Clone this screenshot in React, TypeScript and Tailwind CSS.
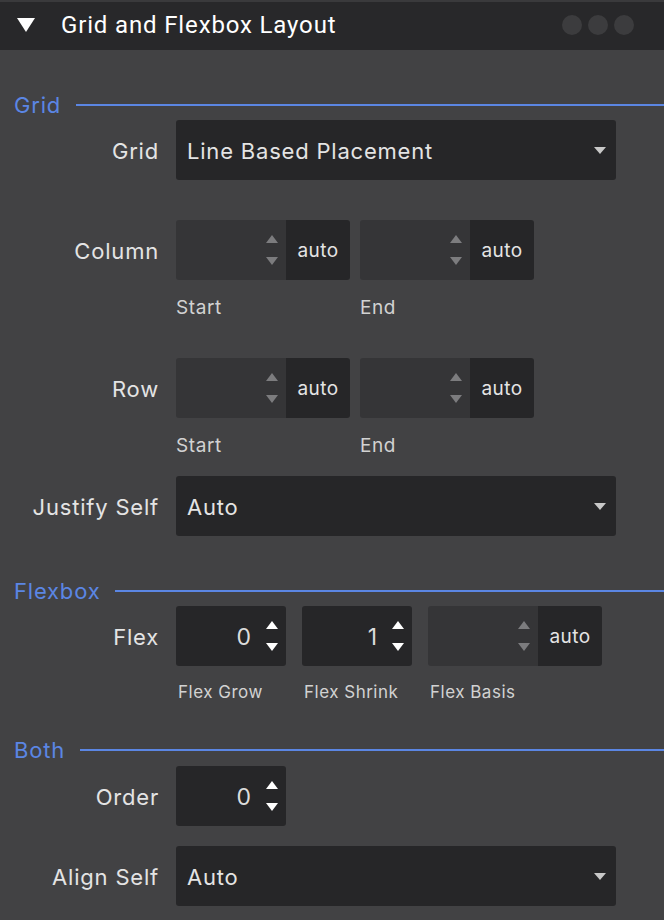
import React from "react";

const BLUE = "text-[#5b86e4]";

function SectionHeader({ title }: { title: string }) {
  return (
    <div className="flex items-center h-6 pl-[14px]">
      <span className={`text-[22px] leading-6 tracking-[0.8px] ${BLUE}`}>{title}</span>
      <div className="flex-1 h-[1.5px] bg-[#5b86e4] ml-[15px]" />
    </div>
  );
}

function Label({ children }: { children: React.ReactNode }) {
  return (
    <div className="w-[160px] shrink-0 text-right text-[22px] tracking-[0.8px] text-[#e4e4e4] pr-[1px] pt-[2px]">{children}</div>
  );
}

function Arrows({ dim }: { dim?: boolean }) {
  const c = dim ? "#7c7c7e" : "#ffffff";
  return (
    <svg width="14" height="32" viewBox="0 0 14 32" className="shrink-0">
      <polygon points="7,1 13,9 1,9" fill={c} />
      <polygon points="1,23 13,23 7,31" fill={c} />
    </svg>
  );
}

function AutoInput() {
  return (
    <div className="flex w-[174px] h-[60px] rounded-[3px] overflow-hidden">
      <div className="w-[110px] bg-[#353537] flex items-center justify-end pr-[7px]">
        <Arrows dim />
      </div>
      <div className="flex-1 bg-[#262628] flex items-center justify-center text-[19px] tracking-[0.4px] text-[#e4e4e4] pt-[3px]">auto</div>
    </div>
  );
}

function NumInput({ value }: { value: string }) {
  return (
    <div className="flex w-[110px] h-[60px] rounded-[3px] bg-[#262628] items-center justify-end pr-[7px]">
      <span className="text-[23px] text-[#dcdcdc] mr-[14px] pt-[2px]">{value}</span>
      <Arrows />
    </div>
  );
}

function Select({ value }: { value: string }) {
  return (
    <div className="flex w-[440px] h-[60px] rounded-[3px] bg-[#262628] items-center pl-[11px] pr-[10px]">
      <span className="flex-1 text-[22px] tracking-[0.8px] text-[#e4e4e4] pt-[2px]">{value}</span>
      <svg width="12" height="7" viewBox="0 0 12 7">
        <polygon points="0,0 12,0 6,7" fill="#c8c8c8" />
      </svg>
    </div>
  );
}

function SubLabel({ children }: { children: React.ReactNode }) {
  return <div className="w-[174px] text-[19px] tracking-[0.6px] text-[#d2d2d2] pt-[2px]">{children}</div>;
}

function FlexLabel({ children }: { children: React.ReactNode }) {
  return <div className="w-[110px] text-[17px] tracking-[0.5px] text-[#d2d2d2] whitespace-nowrap pt-[2px]">{children}</div>;
}

export default function App() {
  return (
    <div
      className="w-[664px] h-[920px] bg-[#424244] overflow-hidden"
      style={{ fontFamily: "Inter, 'Noto Sans', sans-serif" }}
    >
      <div className="h-[2px] bg-[#3a3a3c]" />
      <div className="h-[48px] bg-[#28282a] flex items-center pb-[2px]">
        <svg width="18" height="14" viewBox="0 0 18 14" className="ml-[17px]">
          <polygon points="0,0 18,0 9,14" fill="#ffffff" />
        </svg>
        <span
          className="ml-[26px] text-[24px] tracking-[0.85px] text-white flex-1"
          style={{ fontFamily: "Roboto, 'Liberation Sans', sans-serif" }}
        >
          Grid and Flexbox Layout
        </span>
        <div className="flex gap-[6px] mr-[30px]">
          <div className="w-5 h-5 rounded-full bg-[#3c3c3e]" />
          <div className="w-5 h-5 rounded-full bg-[#3c3c3e]" />
          <div className="w-5 h-5 rounded-full bg-[#3c3c3e]" />
        </div>
      </div>

      <div className="pt-[43px]">
        <SectionHeader title="Grid" />
        <div className="flex items-center gap-4 mt-[3px]">
          <Label>Grid</Label>
          <Select value="Line Based Placement" />
        </div>

        <div className="flex items-center gap-4 mt-[40px]">
          <Label>Column</Label>
          <div className="flex gap-[10px]">
            <AutoInput />
            <AutoInput />
          </div>
        </div>
        <div className="flex ml-[176px] mt-[15px] gap-[10px] h-[24px] items-center">
          <SubLabel>Start</SubLabel>
          <SubLabel>End</SubLabel>
        </div>

        <div className="flex items-center gap-4 mt-[39px]">
          <Label>Row</Label>
          <div className="flex gap-[10px]">
            <AutoInput />
            <AutoInput />
          </div>
        </div>
        <div className="flex ml-[176px] mt-[15px] gap-[10px] h-[24px] items-center">
          <SubLabel>Start</SubLabel>
          <SubLabel>End</SubLabel>
        </div>

        <div className="flex items-center gap-4 mt-[19px]">
          <Label>Justify Self</Label>
          <Select value="Auto" />
        </div>

        <div className="mt-[43px]">
          <SectionHeader title="Flexbox" />
        </div>
        <div className="flex items-center gap-4 mt-[3px]">
          <Label>Flex</Label>
          <div className="flex gap-4">
            <NumInput value="0" />
            <NumInput value="1" />
            <AutoInput />
          </div>
        </div>
        <div className="flex ml-[178px] mt-[14px] gap-4 h-[24px] items-center">
          <FlexLabel>Flex Grow</FlexLabel>
          <FlexLabel>Flex Shrink</FlexLabel>
          <FlexLabel>Flex Basis</FlexLabel>
        </div>

        <div className="mt-[34px]">
          <SectionHeader title="Both" />
        </div>
        <div className="flex items-center gap-4 mt-[4px]">
          <Label>Order</Label>
          <NumInput value="0" />
        </div>
        <div className="flex items-center gap-4 mt-[20px]">
          <Label>Align Self</Label>
          <Select value="Auto" />
        </div>
      </div>
    </div>
  );
}
